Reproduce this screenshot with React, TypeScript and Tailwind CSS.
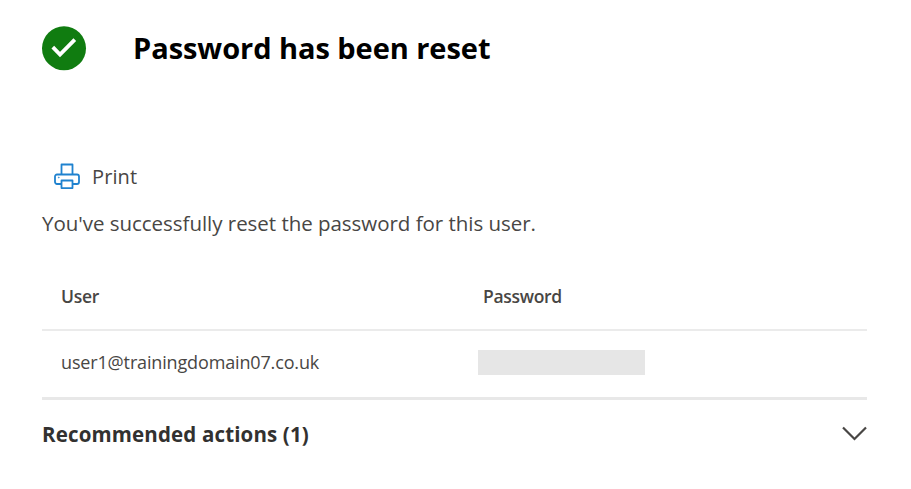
const users = [{ name: "user1@trainingdomain07.co.uk" }];

export default function App() {
  return (
    <main className="h-[489px] w-[911px] overflow-hidden bg-white pl-[42px] pr-[44px] pt-[26px] font-['Open_Sans',sans-serif] text-[#484644]">
      <header className="flex h-[45px] items-center gap-[46px]">
        <StatusIcon />
        <h1 className="whitespace-nowrap pb-[2px] text-[29px] font-bold leading-[43px] tracking-[-0.05px] text-black">
          Password has been reset
        </h1>
      </header>

      <button className="ml-[12px] mt-[89px] flex h-[32px] items-center gap-[12px] text-[20px]">
        <PrinterIcon />
        <span className="pt-[2px] tracking-[0.1px]">Print</span>
      </button>

      <p className="mt-[15px] h-[33px] whitespace-nowrap text-[20.5px] leading-[32px] tracking-[-0.03px]">
        You've successfully reset the password for this user.
      </p>

      <section className="mt-[25px]">
        <div className="grid h-[66px] grid-cols-[422px_1fr] items-center border-b-2 border-[#ebebeb] pb-[2px] pl-[19px] text-[17.5px] font-semibold tracking-[-0.3px]">
          <span>User</span>
          <span>Password</span>
        </div>
        {users.map((u) => (
          <div key={u.name} className="grid h-[69px] grid-cols-[417px_1fr] items-center border-b-3 border-[#e8e8e8] pb-[3px] pl-[19px] text-[18px] tracking-[-0.15px]">
            <span>{u.name}</span>
            <span className="h-[25px] w-[167px] bg-[#e6e6e6]" />
          </div>
        ))}
      </section>

      <button className="flex h-[68px] w-full items-center justify-between text-[20.5px] font-bold text-[#323130]">
        <span className="tracking-[0.15px]">Recommended actions (1)</span>
        <Chevron />
      </button>
    </main>
  );
}

function StatusIcon() {
  return (
    <svg className="size-[45px]" viewBox="0 0 45 45" fill="none">
      <circle cx="22" cy="22.3" r="22" fill="#107c10" />
      <path d="M10.8 21.2 18 28.5 32.8 13.6" stroke="white" strokeWidth="3.8" />
    </svg>
  );
}

function PrinterIcon() {
  return (
    <svg className="size-[26px]" viewBox="0 0 26 26" fill="none" stroke="#1f82cf" strokeWidth="1.8" strokeLinejoin="round">
      <path d="M7.5 21H3a2 2 0 0 1-2-2v-5.5a2 2 0 0 1 2-2h20a2 2 0 0 1 2 2V19a2 2 0 0 1-2 2h-4.5" />
      <path d="M7.5 11.5V1.5h11v10M7.5 17.5h11v7.6h-11z" />
      <circle cx="4.8" cy="14.5" r=".4" strokeWidth="1" />
    </svg>
  );
}

function Chevron() {
  return (
    <svg className="h-[16px] w-[25px]" viewBox="0 0 25 16" fill="none" stroke="#484644" strokeWidth="2.2">
      <path d="m1 1.5 11.5 11.5L24 1.5" />
    </svg>
  );
}
